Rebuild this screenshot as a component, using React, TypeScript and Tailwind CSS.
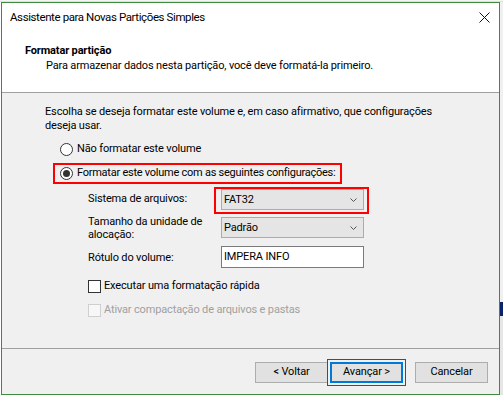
function Chevron() {
  return (
    <svg width="7" height="4" viewBox="0 0 7 4" className="shrink-0">
      <path d="M0.5 0.5 L3.5 3.5 L6.5 0.5" fill="none" stroke="#555" strokeWidth="1" />
    </svg>
  );
}

function Combo({ value }: { value: string }) {
  return (
    <div className="w-[143px] h-[21px] bg-[#e5e5e5] border border-[#acacac] flex items-center justify-between pl-[2px] pr-[6px]">
      <span className="leading-[15px]">{value}</span>
      <Chevron />
    </div>
  );
}

function Radio({ checked }: { checked?: boolean }) {
  return (
    <div className="w-[13px] h-[13px] rounded-full border border-[#333] bg-white flex items-center justify-center shrink-0">
      {checked && <div className="w-[7px] h-[7px] rounded-full bg-[#333]" />}
    </div>
  );
}

function Button({ label, primary }: { label: string; primary?: boolean }) {
  return (
    <div
      className={
        primary
          ? "w-[73px] h-[21px] bg-[#e1e1e1] border-2 border-[#0078d7] flex items-center justify-center"
          : "w-[73px] h-[21px] bg-[#e1e1e1] border border-[#adadad] flex items-center justify-center"
      }
    >
      {label}
    </div>
  );
}

export default function App() {
  return (
    <div className="w-[503px] h-[395px] bg-white overflow-hidden font-['Roboto',sans-serif] text-[11px] tracking-[-0.15px] text-black whitespace-nowrap">
      {/* strip of the window behind */}
      <div className="h-[2px] bg-[#f4f4f4] border-b border-[#e0e0e0]" />
      <div className="flex">
        <div className="ml-[1px] w-[499px] h-[393px] border border-[#3d8b3d] flex flex-col">
          {/* Header */}
          <div className="h-[90px] bg-white border-b border-[#a0a0a0]">
            <div className="mt-[7px] h-[15px] pl-[8px] pr-[9px] flex items-center justify-between">
              <span className="leading-[15px] text-[11.5px] tracking-[-0.4px]">Assistente para Novas Partições Simples</span>
              <svg width="11" height="11" viewBox="0 0 11 11">
                <path d="M0.5 0.5 L10.5 10.5 M10.5 0.5 L0.5 10.5" stroke="#111" strokeWidth="1" />
              </svg>
            </div>
            <div className="mt-[18px] pl-[23px] leading-[15px] font-bold">Formatar partição</div>
            <div className="pl-[44px] leading-[15px]">
              Para armazenar dados nesta partição, você deve formatá-la primeiro.
            </div>
          </div>

          {/* Body */}
          <div className="h-[256px] bg-[#f0f0f0] border-b border-[#a0a0a0]">
            <div className="pt-[12px] pl-[43px] leading-[14px]">
              <div>Escolha se deseja formatar este volume e, em caso afirmativo, que configurações</div>
              <div>deseja usar.</div>
            </div>

            <div className="mt-[6px] h-[20px] pl-[58px] flex items-center gap-[4px]">
              <Radio />
              <span>Não formatar este volume</span>
            </div>

            <div className="mt-[4px] ml-[51px] w-[289px] h-[21px] border-2 border-[#ff0000] flex items-center gap-[4px] pl-[5px] tracking-[-0.25px]">
              <Radio checked />
              <span>Formatar este volume com as seguintes configurações:</span>
            </div>

            {/* Options */}
            <div className="pl-[86px]">
              <div className="mt-[3px] flex">
                <div className="w-[126px] pt-[4px] leading-[15px]">Sistema de arquivos:</div>
                <div className="w-[155px] h-[27px] border-2 border-[#ff0000] pl-[5px]">
                  <Combo value="FAT32" />
                </div>
              </div>

              <div className="mt-[3px] flex">
                <div className="w-[133px] -mt-[1px] leading-[12.5px]">
                  Tamanho da unidade de
                  <br />
                  alocação:
                </div>
                <Combo value="Padrão" />
              </div>

              <div className="mt-[5px] flex">
                <div className="w-[133px] pt-[4px] leading-[15px]">Rótulo do volume:</div>
                <div className="w-[143px] h-[22px] bg-white border border-[#7a7a7a] pl-[2px] pt-[2px] leading-[15px]">
                  IMPERA INFO
                </div>
              </div>

              <div className="mt-[10px] h-[16px] flex items-center gap-[3px]">
                <div className="w-[13px] h-[13px] bg-white border border-[#333]" />
                <span>Executar uma formatação rápida</span>
              </div>

              <div className="mt-[8px] h-[16px] flex items-center gap-[3px] text-[#a0a0a0]">
                <div className="w-[13px] h-[13px] bg-[#f7f7f7] border border-[#cfcfcf]" />
                <span>Ativar compactação de arquivos e pastas</span>
              </div>
            </div>
          </div>

          {/* Footer */}
          <div className="flex-1 bg-[#f0f0f0] pt-[10px] pr-[11px] flex items-start justify-end">
            <div className="mt-[3px] w-[72px]">
              <Button label="< Voltar" />
            </div>
            <div className="border border-[#ff0000] p-[2px]">
              <Button label="Avançar >" primary />
            </div>
            <div className="mt-[3px] ml-[9px]">
              <Button label="Cancelar" />
            </div>
          </div>
        </div>
        {/* edge of the window behind */}
        <div className="flex-1 flex flex-col">
          <div className="h-[300px] bg-[#f0f0f0]" />
          <div className="h-[14px] bg-[#0a246a]" />
          <div className="flex-1 bg-[#e6e6e6]" />
        </div>
      </div>
    </div>
  );
}
